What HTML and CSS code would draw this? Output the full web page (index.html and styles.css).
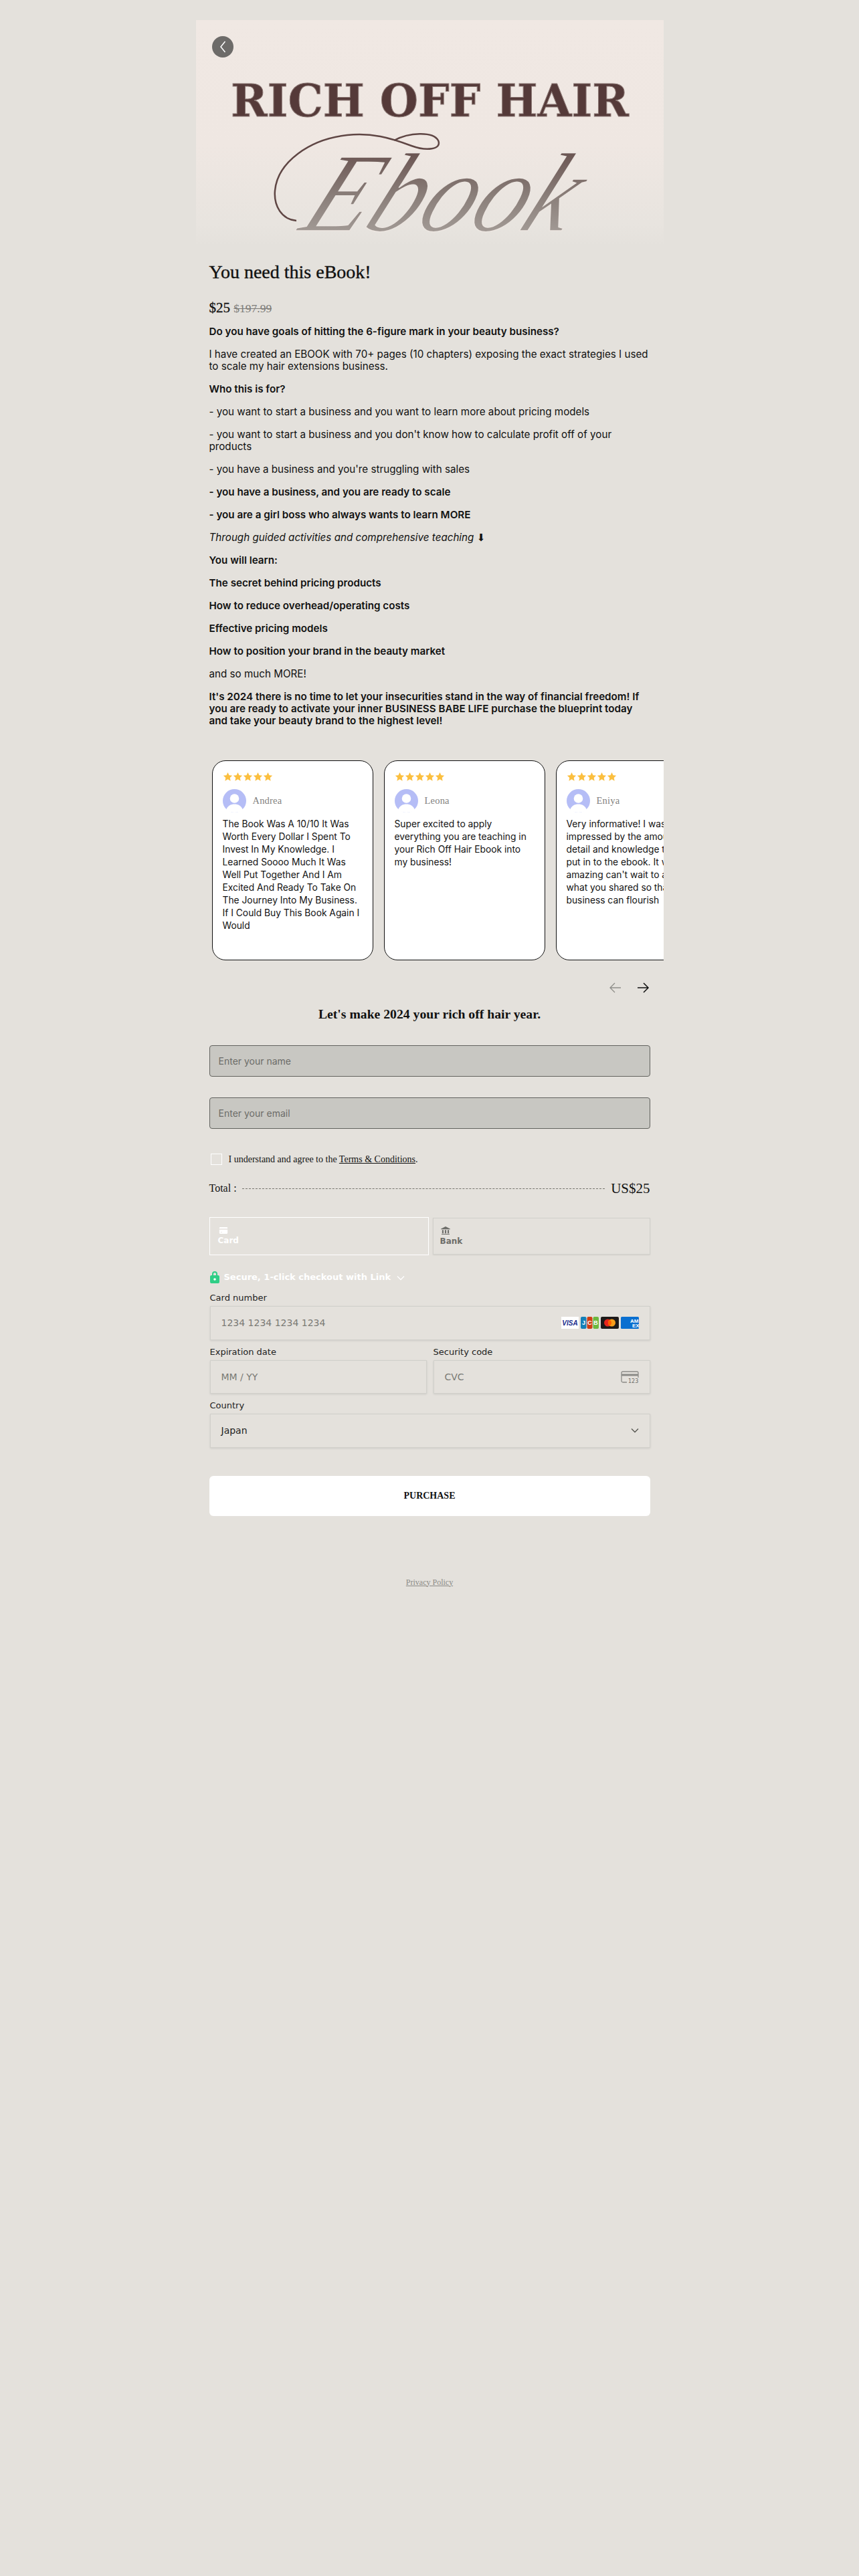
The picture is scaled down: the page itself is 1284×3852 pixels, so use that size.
FILE: index.html
```html
<!DOCTYPE html>
<html lang="en">
<head>
<meta charset="utf-8">
<title>You need this eBook!</title>
<link rel="stylesheet" href="styles.css">
</head>
<body>

<svg class="defs" width="0" height="0">
  <defs>
    <symbol id="star" viewBox="0 0 24 24">
      <path fill="#fbbf3f" d="M12 1.500l3.200 6.900 7.500.9-5.600 5.100 1.500 7.400L12 18.100l-6.600 3.700 1.500-7.400L1.300 9.300l7.500-.9z"/>
    </symbol>
    <symbol id="avatar" viewBox="0 0 35 35">
      <circle cx="17.500" cy="17.500" r="17.500" fill="#b5bdf6"/>
      <circle cx="17.500" cy="14" r="6.800" fill="#fff"/>
      <path fill="#fff" d="M5 31c2-6 7-8.500 12.500-8.500S28 25 30 31c-3 2.700-7.500 4-12.500 4S8 33.700 5 31z"/>
    </symbol>
    <linearGradient id="ebookfade" x1="0" y1="0" x2="0" y2="1">
      <stop offset="0" stop-color="#5a403e"/>
      <stop offset=".55" stop-color="#8c817c"/>
      <stop offset="1" stop-color="#b0aaa5"/>
    </linearGradient>
  </defs>
</svg>

<div class="page">

  <div class="hero">
    <a class="back-btn" href="#">
      <svg width="12" height="20" viewBox="0 0 12 20"><path d="M9.500 2L3 10l6.500 8" fill="none" stroke="#fff" stroke-width="1.500"/></svg>
    </a>
    <svg class="hero-art" width="699" height="338" viewBox="0 0 699 338">
      <text class="hero-title" x="52" y="144" textLength="595" lengthAdjust="spacingAndGlyphs">RICH OFF HAIR</text>
      <path d="M150 300C128 298 116 278 118 255C122 212 170 178 226 172C262 168 290 176 322 188C344 196 368 194 362 180C354 166 318 168 296 180" fill="none" stroke="#5f4644" stroke-width="2.500"/>
      <g transform="translate(0 315) skewX(-25)">
        <text class="hero-script" x="150" y="0" textLength="398" lengthAdjust="spacingAndGlyphs" fill="url(#ebookfade)">Ebook</text>
      </g>
    </svg>
  </div>

  <div class="content">
    <h1 class="title">You need this eBook!</h1>
    <div class="price">$25 <s class="price-old">$197.99</s></div>

    <div class="desc">
      <p><b>Do you have goals of hitting the 6-figure mark in your beauty business?</b></p>
      <p>I have created an EBOOK with 70+ pages (10 chapters) exposing the exact strategies I used to scale my hair extensions business.</p>
      <p><b>Who this is for?</b></p>
      <p>- you want to start a business and you want to learn more about pricing models</p>
      <p>- you want to start a business and you don't know how to calculate profit off of your products</p>
      <p>- you have a business and you're struggling with sales</p>
      <p><b>- you have a business, and you are ready to scale</b></p>
      <p><b>- you are a girl boss who always wants to learn MORE</b></p>
      <p><i>Through guided activities and comprehensive teaching</i> <span class="arrow-emoji">⬇</span></p>
      <p><b>You will learn:</b></p>
      <p><b>The secret behind pricing products</b></p>
      <p><b>How to reduce overhead/operating costs</b></p>
      <p><b>Effective pricing models</b></p>
      <p><b>How to position your brand in the beauty market</b></p>
      <p>and so much MORE!</p>
      <p><b>It's 2024 there is no time to let your insecurities stand in the way of financial freedom! If you are ready to activate your inner BUSINESS BABE LIFE purchase the blueprint today and take your beauty brand to the highest level!</b></p>
    </div>
  </div>

  <div class="reviews">
    <div class="review">
      <div class="stars">
        <svg><use href="#star"/></svg><svg><use href="#star"/></svg><svg><use href="#star"/></svg><svg><use href="#star"/></svg><svg><use href="#star"/></svg>
      </div>
      <div class="reviewer"><svg class="avatar"><use href="#avatar"/></svg><span>Andrea</span></div>
      <p class="review-text">The Book Was A 10/10 It Was Worth Every Dollar I Spent To Invest In My Knowledge. I Learned Soooo Much It Was Well Put Together And I Am Excited And Ready To Take On The Journey Into My Business. If I Could Buy This Book Again I Would</p>
    </div>
    <div class="review">
      <div class="stars">
        <svg><use href="#star"/></svg><svg><use href="#star"/></svg><svg><use href="#star"/></svg><svg><use href="#star"/></svg><svg><use href="#star"/></svg>
      </div>
      <div class="reviewer"><svg class="avatar"><use href="#avatar"/></svg><span>Leona</span></div>
      <p class="review-text">Super excited to apply everything you are teaching in your Rich Off Hair Ebook into my business!</p>
    </div>
    <div class="review">
      <div class="stars">
        <svg><use href="#star"/></svg><svg><use href="#star"/></svg><svg><use href="#star"/></svg><svg><use href="#star"/></svg><svg><use href="#star"/></svg>
      </div>
      <div class="reviewer"><svg class="avatar"><use href="#avatar"/></svg><span>Eniya</span></div>
      <p class="review-text">Very informative! I was impressed by the amount of detail and knowledge that was put in to the ebook. It was amazing can't wait to apply what you shared so that my business can flourish</p>
    </div>
  </div>

  <div class="content">
    <div class="review-nav">
      <svg width="20" height="20" viewBox="0 0 20 20"><path d="M18 10H2M9 3l-7 7 7 7" fill="none" stroke="#8f8e8a" stroke-width="1.300"/></svg>
      <svg width="20" height="20" viewBox="0 0 20 20"><path d="M2 10h16M11 3l7 7-7 7" fill="none" stroke="#111" stroke-width="1.500"/></svg>
    </div>

    <h2 class="form-heading">Let's make 2024 your rich off hair year.</h2>

    <div class="text-field">Enter your name</div>
    <div class="text-field">Enter your email</div>

    <div class="agree">
      <span class="checkbox"></span>
      <span>I understand and agree to the <a href="#">Terms &amp; Conditions</a>.</span>
    </div>

    <div class="total">
      <span>Total :</span>
      <span class="dots"></span>
      <span class="total-amount">US$25</span>
    </div>

    <div class="tabs">
      <div class="tab tab-active">
        <svg width="16" height="13" viewBox="0 0 16 13"><path fill="#fff" d="M1.500 0h13A1.500 1.500 0 0 1 16 1.500V3H0V1.500A1.500 1.500 0 0 1 1.500 0zM0 5h16v6.500a1.500 1.500 0 0 1-1.500 1.500h-13A1.500 1.500 0 0 1 0 11.500zm3 4v1.500h2V9z"/></svg>
        <span>Card</span>
      </div>
      <div class="tab">
        <svg width="16" height="14" viewBox="0 0 16 14"><path fill="#6d6d69" d="M8 0l8 4v1H0V4zM2 6h2.500v6H2zM6.700 6h2.600v6H6.700zM11.500 6H14v6h-2.500zM1 12.700h14V14H1z"/></svg>
        <span>Bank</span>
      </div>
    </div>

    <div class="secure">
      <svg width="14" height="19" viewBox="0 0 14 19"><path fill="#2fce86" d="M3 7V5a4 4 0 0 1 8 0v2h1a2 2 0 0 1 2 2v8a2 2 0 0 1-2 2H2a2 2 0 0 1-2-2V9a2 2 0 0 1 2-2zm2 0h4V5a2 2 0 0 0-4 0z"/><circle cx="7" cy="13" r="1.800" fill="#fff"/></svg>
      <span>Secure, 1-click checkout with Link</span>
      <svg class="secure-chev" width="12" height="8" viewBox="0 0 12 8"><path d="M1 1.500l5 5 5-5" fill="none" stroke="#fff" stroke-width="1.300"/></svg>
    </div>

    <div class="pay-fields">
      <div class="field field-wide">
        <label>Card number</label>
        <div class="field-box">
          <span class="placeholder">1234 1234 1234 1234</span>
          <span class="card-logos">
            <svg width="26" height="18" viewBox="0 0 26 18"><rect width="26" height="18" fill="#fff"/><text class="logo-visa" x="13" y="13" text-anchor="middle">VISA</text></svg>
            <svg width="27" height="18" viewBox="0 0 27 18"><rect width="8.500" height="18" rx="2" fill="#1580b8"/><rect x="9.500" width="8" height="18" rx="2" fill="#cf3f14"/><rect x="18.500" width="8.500" height="18" rx="2" fill="#6cb83f"/><text class="logo-jcb" x="4.500" y="12">J</text><text class="logo-jcb" x="13.500" y="12">C</text><text class="logo-jcb" x="22.500" y="12">B</text></svg>
            <svg width="27" height="18" viewBox="0 0 27 18"><rect width="27" height="18" rx="2" fill="#1d1a1a"/><circle cx="10.500" cy="9" r="5.500" fill="#e8261c"/><circle cx="16.500" cy="9" r="5.500" fill="#f79e1b"/><path d="M13.500 4.400a5.500 5.500 0 0 1 0 9.200 5.500 5.500 0 0 1 0-9.200z" fill="#ff5f00"/></svg>
            <svg width="27" height="18" viewBox="0 0 27 18"><rect width="27" height="18" rx="1.500" fill="#0a6fd0"/><text class="logo-amex" x="14" y="8.500">AM</text><text class="logo-amex" x="17" y="15.500">EX</text></svg>
          </span>
        </div>
      </div>
      <div class="field">
        <label>Expiration date</label>
        <div class="field-box"><span class="placeholder">MM / YY</span></div>
      </div>
      <div class="field">
        <label>Security code</label>
        <div class="field-box">
          <span class="placeholder">CVC</span>
          <svg width="27" height="18" viewBox="0 0 27 18"><path d="M9 17H3a2 2 0 0 1-2-2V3a2 2 0 0 1 2-2h21a2 2 0 0 1 2 2v7" fill="none" stroke="#8b8b87" stroke-width="1.300"/><path d="M1 4.500h25v3H1z" fill="#8b8b87"/><text class="logo-cvc" x="11" y="17.500">123</text></svg>
        </div>
      </div>
      <div class="field field-wide">
        <label>Country</label>
        <div class="field-box">
          <span class="select-value">Japan</span>
          <svg width="12" height="8" viewBox="0 0 12 8"><path d="M1 1.500l5 5 5-5" fill="none" stroke="#55554f" stroke-width="1.300"/></svg>
        </div>
      </div>
    </div>

    <a class="purchase" href="#">PURCHASE</a>
    <div class="privacy"><a href="#">Privacy Policy</a></div>
  </div>

</div>
</body>
</html>
```

FILE: styles.css
```css
body {
  margin: 0;
  background-color: #e4e1dc;
  color: #111;
  font-family: "Inter", "Liberation Sans", sans-serif;
  font-size: 14px;
}

.defs {
  display: block;
  height: 0;
}

.page {
  width: 699px;
  margin: 0 auto;
  padding-top: 30px;
}

.content {
  padding: 0 20px;
}

/* hero */
.hero {
  position: relative;
  height: 338px;
  background: linear-gradient(#f0e8e3 0%, #efe7e2 55%, #e8e4df 90%, #e4e1dc 100%);
}

.hero-art {
  display: block;
}

.hero-title {
  font-family: "DejaVu Serif", serif;
  font-weight: 700;
  font-size: 67px;
  fill: #553a39;
  stroke: #8d7a76;
  stroke-width: 1;
}

.hero-script {
  font-family: "Liberation Serif", serif;
  font-style: italic;
  font-size: 168px;
  stroke: #ece6e1;
  stroke-width: 1.5;
}

.back-btn {
  position: absolute;
  left: 24px;
  top: 24px;
  width: 32px;
  height: 32px;
  border-radius: 50%;
  background: #6d6b69;
  display: flex;
  align-items: center;
  justify-content: center;
}

/* product text */
.title {
  margin: 23px 0 0;
  font-family: "Liberation Serif", serif;
  font-weight: 400;
  font-size: 28px;
  line-height: 32px;
  -webkit-text-stroke: 0.4px #111;
}

.price {
  margin-top: 25px;
  font-family: "Liberation Serif", serif;
  font-size: 21px;
  line-height: 24px;
  -webkit-text-stroke: 0.3px #111;
}

.price-old {
  color: #7d7c79;
  font-size: 17.5px;
  -webkit-text-stroke: 0;
}

.desc {
  margin-top: 14px;
  font-size: 15.2px;
  line-height: 18px;
}

.desc p {
  margin: 0 0 16px;
}

.desc p:last-child {
  margin-bottom: 0;
}

.desc b {
  font-weight: 600;
}

.arrow-emoji {
  font-family: "DejaVu Sans", sans-serif;
  font-size: 15px;
  line-height: 1;
}

/* reviews */
.reviews {
  display: flex;
  gap: 16px;
  margin-top: 50px;
  padding-left: 24px;
  overflow: hidden;
}

.review {
  flex: 0 0 239px;
  box-sizing: border-box;
  height: 299px;
  padding: 16px 15px;
  background: #fff;
  border: 1px solid #111;
  border-radius: 20px;
}

.stars {
  display: flex;
  gap: 0;
  height: 15px;
}

.stars svg {
  width: 15px;
  height: 15px;
}

.reviewer {
  display: flex;
  align-items: center;
  gap: 10px;
  margin-top: 11px;
  font-family: "Liberation Serif", serif;
  font-size: 14.5px;
  letter-spacing: 0.2px;
  color: #82817e;
}

.avatar {
  width: 35px;
  height: 35px;
}

.review-text {
  margin: 8px 0 0;
  line-height: 19px;
  width: 209px;
  font-size: 13.8px;
  color: #111;
}

.review-nav {
  display: flex;
  justify-content: flex-end;
  gap: 21px;
  margin-top: 31px;
  padding-right: 1px;
  height: 20px;
}

.form-heading {
  margin: 17px 0 0;
  text-align: center;
  font-family: "Liberation Serif", serif;
  font-weight: 700;
  font-size: 19.7px;
  line-height: 24px;
}

/* form */
.text-field {
  box-sizing: border-box;
  height: 47px;
  margin-top: 31px;
  padding: 0 13px;
  display: flex;
  align-items: center;
  background: #c8c7c2;
  border: 1px solid #62625e;
  border-radius: 4px;
  color: #6c6c68;
}

.form-heading + .text-field {
  margin-top: 35px;
}

.agree {
  display: flex;
  align-items: center;
  gap: 10px;
  margin: 37px 0 0 2px;
  font-family: "Liberation Serif", serif;
  font-size: 14px;
  height: 17px;
}

.agree a {
  color: #111;
}

.checkbox {
  box-sizing: border-box;
  width: 17px;
  height: 17px;
  border: 1px solid #fff;
}

.total {
  display: flex;
  align-items: center;
  margin-top: 21px;
  height: 28px;
  font-family: "Liberation Serif", serif;
  font-size: 16px;
}

.dots {
  flex: 1;
  margin: 0 9px 0 8px;
  border-top: 1px dashed #77766f;
}

.total-amount {
  font-size: 21px;
}

.tabs {
  display: flex;
  gap: 6px;
  margin-top: 29px;
  align-items: flex-start;
  font-family: "DejaVu Sans", sans-serif;
  font-weight: 700;
  font-size: 12px;
  color: #6d6d69;
}

.tab {
  box-sizing: border-box;
  flex: 0 0 325px;
  height: 55px;
  margin-top: 1px;
  padding: 12px 10px;
  display: flex;
  flex-direction: column;
  gap: 3px;
  border: 1px solid #d1d0cb;
  box-shadow: 0 1px 2px rgba(0, 0, 0, 0.08);
}

.tab-active {
  flex-basis: 328px;
  height: 57px;
  margin-top: 0;
  padding: 14px 12px;
  border-color: #fff;
  color: #fff;
  box-shadow: none;
}

.secure {
  display: flex;
  align-items: center;
  gap: 7px;
  margin: 23px 0 0 1px;
  height: 18px;
  font-family: "DejaVu Sans", sans-serif;
  font-weight: 700;
  font-size: 13px;
  color: #fff;
}

.secure-chev {
  margin-left: 2px;
  margin-top: 3px;
}

.pay-fields {
  display: grid;
  grid-template-columns: 324px 324px;
  column-gap: 10px;
  row-gap: 10px;
  margin: 15px 0 0 1px;
  font-family: "DejaVu Sans", sans-serif;
}

.field-wide {
  grid-column: 1 / 3;
}

.field label {
  display: block;
  height: 16px;
  line-height: 16px;
  margin-bottom: 4px;
  font-size: 13px;
  color: #222;
}

.field-box {
  box-sizing: border-box;
  height: 50.5px;
  padding: 0 16px;
  display: flex;
  align-items: center;
  justify-content: space-between;
  border: 1px solid #d1d0cb;
  box-shadow: 0 1px 3px rgba(0, 0, 0, 0.1);
  font-size: 14px;
}

.placeholder {
  color: #7a7a75;
}

.select-value {
  color: #222;
}

.card-logos {
  display: flex;
  gap: 3px;
}

.card-logos svg {
  display: block;
}

.logo-visa {
  font-family: "Liberation Sans", sans-serif;
  font-weight: 700;
  font-style: italic;
  font-size: 10px;
  fill: #1a2d8c;
}

.logo-jcb {
  font-family: "Liberation Sans", sans-serif;
  font-weight: 700;
  font-size: 9px;
  fill: #fff;
  text-anchor: middle;
}

.logo-amex {
  font-family: "Liberation Sans", sans-serif;
  font-weight: 700;
  font-size: 8px;
  fill: #fff;
}

.logo-cvc {
  font-family: "DejaVu Sans", sans-serif;
  font-size: 8px;
  fill: #6e6e6a;
}

.purchase {
  display: flex;
  align-items: center;
  justify-content: center;
  height: 60px;
  margin-top: 42px;
  background: #fff;
  border-radius: 6px;
  color: #111;
  text-decoration: none;
  font-family: "Liberation Serif", serif;
  font-weight: 700;
  font-size: 14px;
}

.privacy {
  margin-top: 92px;
  text-align: center;
  font-family: "Liberation Serif", serif;
  font-size: 12px;
  line-height: 14px;
}

.privacy a {
  color: #8b8a86;
}
```
